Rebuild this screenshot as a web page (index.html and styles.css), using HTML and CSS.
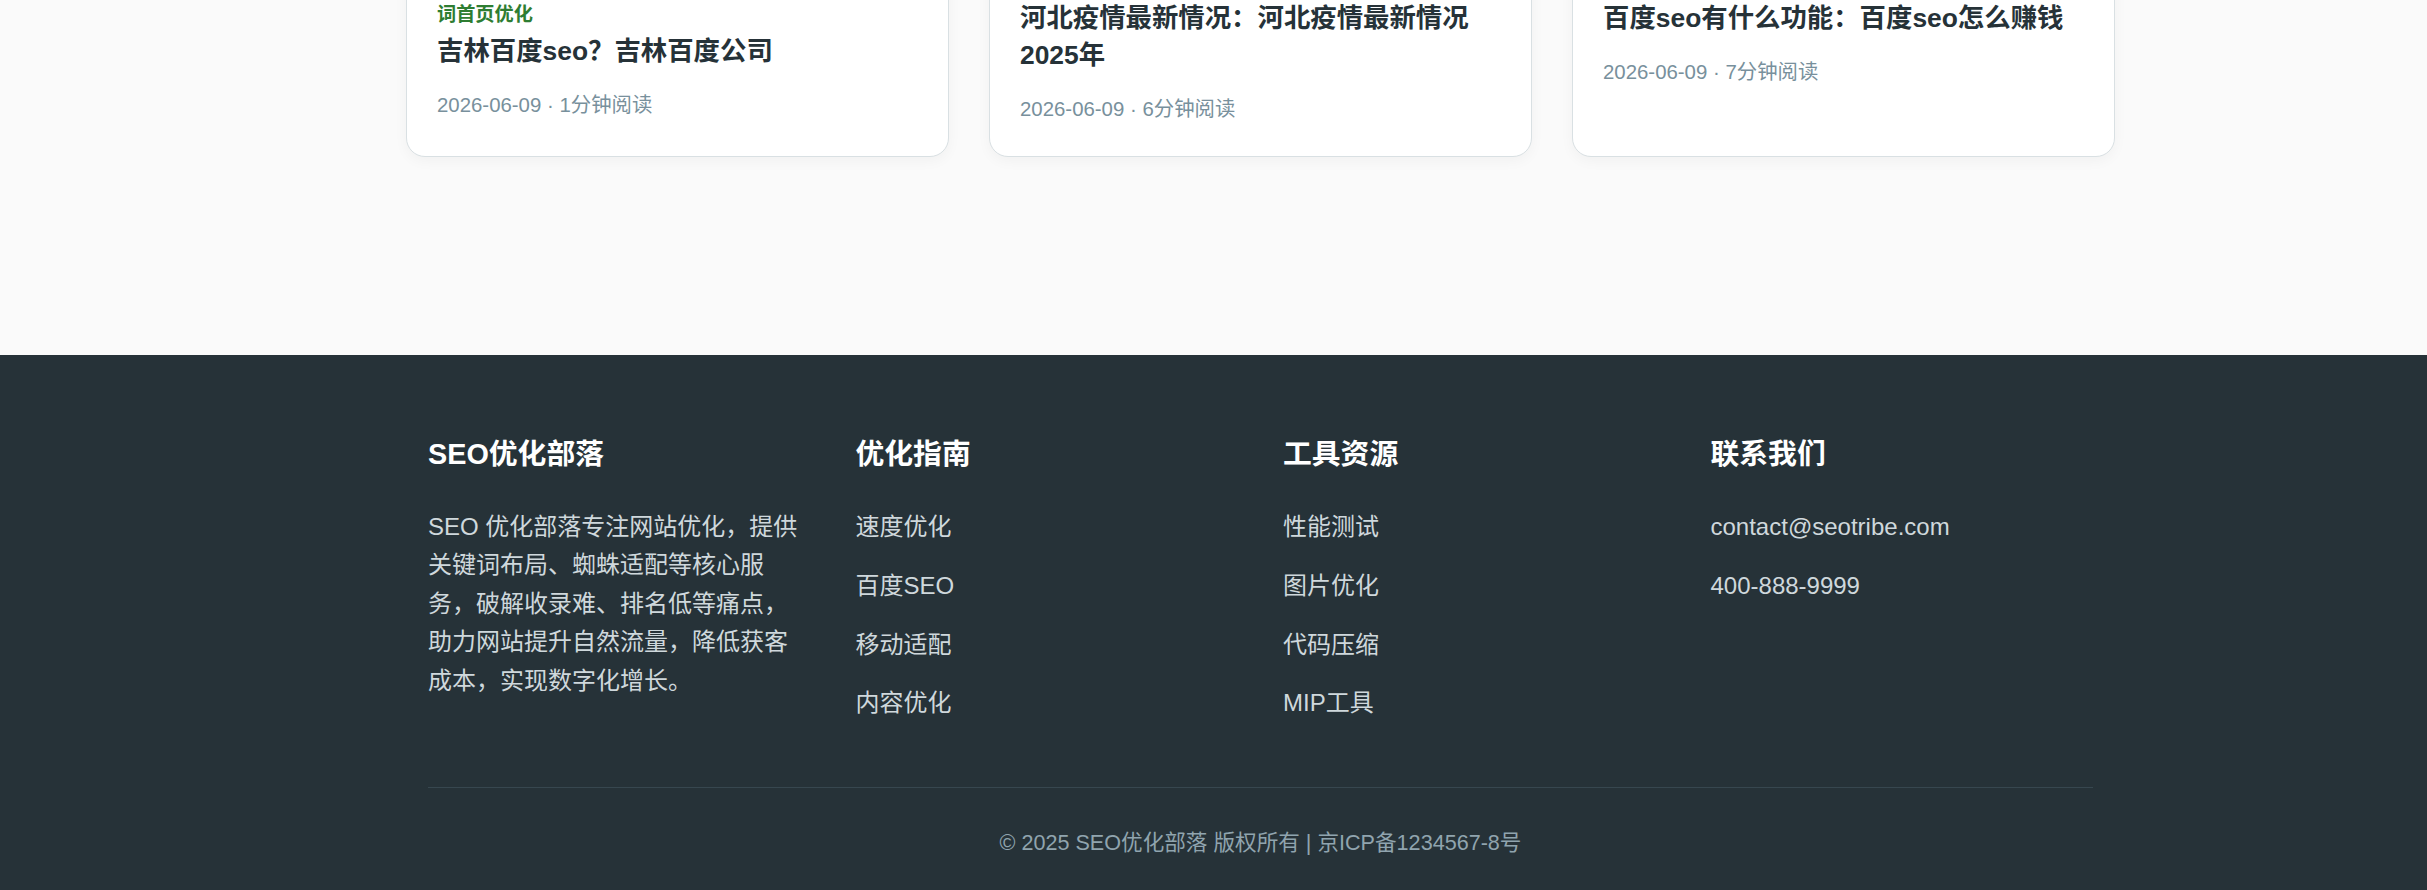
FILE: index.html
```html
<!DOCTYPE html>
<html lang="zh-CN">
<head>
    <meta charset="UTF-8">
    <meta name="viewport" content="width=device-width, initial-scale=1.0">
    <title>SEO优化部落</title>
    <link rel="stylesheet" href="styles.css">
</head>
<body>
    <main class="posts">
        <div class="container">
            <div class="post-grid">
                <article class="card">
                    <div class="card-thumb"></div>
                    <span class="card-tag">词首页优化</span>
                    <h3 class="card-title">吉林百度seo？吉林百度公司</h3>
                    <div class="card-meta">2026-06-09 · 1分钟阅读</div>
                </article>
                <article class="card">
                    <div class="card-thumb"></div>
                    <h3 class="card-title">河北疫情最新情况：河北疫情最新情况2025年</h3>
                    <div class="card-meta">2026-06-09 · 6分钟阅读</div>
                </article>
                <article class="card">
                    <div class="card-thumb"></div>
                    <h3 class="card-title">百度seo有什么功能：百度seo怎么赚钱</h3>
                    <div class="card-meta">2026-06-09 · 7分钟阅读</div>
                </article>
            </div>
        </div>
    </main>

    <footer class="site-footer">
        <div class="container footer-inner">
            <div class="footer-grid">
                <div class="footer-col">
                    <h3>SEO优化部落</h3>
                    <p>SEO 优化部落专注网站优化，提供关键词布局、蜘蛛适配等核心服务，破解收录难、排名低等痛点，助力网站提升自然流量，降低获客成本，实现数字化增长。</p>
                </div>
                <div class="footer-col">
                    <h3>优化指南</h3>
                    <ul>
                        <li><a href="#">速度优化</a></li>
                        <li><a href="#">百度SEO</a></li>
                        <li><a href="#">移动适配</a></li>
                        <li><a href="#">内容优化</a></li>
                    </ul>
                </div>
                <div class="footer-col">
                    <h3>工具资源</h3>
                    <ul>
                        <li><a href="#">性能测试</a></li>
                        <li><a href="#">图片优化</a></li>
                        <li><a href="#">代码压缩</a></li>
                        <li><a href="#">MIP工具</a></li>
                    </ul>
                </div>
                <div class="footer-col">
                    <h3>联系我们</h3>
                    <ul>
                        <li>contact@seotribe.com</li>
                        <li>400-888-9999</li>
                    </ul>
                </div>
            </div>
            <div class="footer-bottom">
                © 2025 SEO优化部落 版权所有 | 京ICP备1234567-8号
            </div>
        </div>
    </footer>
</body>
</html>
```

FILE: styles.css
```css
* {
    box-sizing: border-box;
}
body {
    margin: 0;
    font-family: "Liberation Sans", Arial, "Noto Sans CJK SC", sans-serif;
    font-size: 24px;
    line-height: 1.6;
    color: #263238;
    background-color: #fafafa;
}
.container {
    max-width: 1709px;
    margin: 0 auto;
}
.posts {
    padding: 0 0 197.5px 94px;
}
.post-grid {
    display: grid;
    grid-template-columns: repeat(3, 1fr);
    gap: 40px;
    margin-top: -244px;
}
.card {
    background-color: #fff;
    border: 1px solid #d9e0e3;
    border-radius: 19px;
    padding: 30px;
    box-shadow: 0 4px 14px rgba(0, 0, 0, 0.04);
}
.card-thumb {
    height: 193px;
    margin-bottom: 20px;
    border-radius: 12px;
    background-color: #eceff1;
}
.card-tag {
    display: block;
    font-size: 19.2px;
    font-weight: bold;
    color: #2e7d32;
    margin-bottom: 2px;
}
.card-title {
    margin: 0;
    font-size: 26.4px;
    line-height: 1.4;
    font-weight: bold;
    color: #263238;
}
.card-meta {
    margin-top: 19.5px;
    font-size: 20.4px;
    color: #78909c;
}
.site-footer {
    background-color: #263238;
    color: #cfd8dc;
    padding: 81px 0 0 94px;
}
.footer-inner {
    padding: 0 22px;
}
.footer-grid {
    display: grid;
    grid-template-columns: repeat(4, 1fr);
    gap: 45px;
    margin-bottom: 43.5px;
}
.footer-col h3 {
    margin: 0 0 35px;
    font-size: 28.8px;
    line-height: 1.3;
    color: #fff;
}
.footer-col p {
    margin: 0;
}
.footer-col ul {
    list-style: none;
    margin: 0;
    padding: 0;
}
.footer-col li {
    margin-bottom: 20.4px;
}
.footer-col a {
    color: #cfd8dc;
    text-decoration: none;
}
.footer-bottom {
    border-top: 1px solid #37474f;
    padding: 38px 0 40px;
    text-align: center;
    font-size: 21.6px;
    color: #90a4ae;
}
```
